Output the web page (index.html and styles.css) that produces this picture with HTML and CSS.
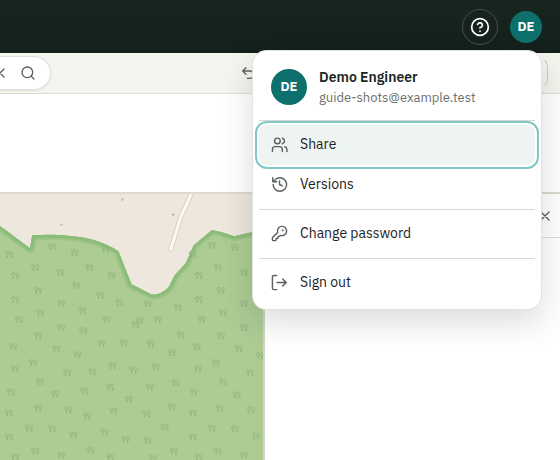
FILE: index.html
```
<!DOCTYPE html>
<html lang="en">
<head>
<meta charset="utf-8">
<title>Map editor</title>
<link rel="stylesheet" href="styles.css">
</head>
<body>
<header class="topbar">
  <button class="help" type="button" aria-label="Help">
    <svg class="icon icon-help" viewBox="0 0 24 24"><circle cx="12" cy="12" r="10"/><path d="M9.1 9a3 3 0 0 1 5.8 1c0 2-3 3-3 3M12 17h.01"/></svg>
  </button>
  <div class="account">
    <button class="avatar" type="button">DE</button>
    <div class="menu">
      <div class="profile">
        <span class="avatar avatar-large">DE</span>
        <div>
          <div class="name">Demo Engineer</div>
          <div class="email">guide-shots@example.test</div>
        </div>
      </div>
      <hr>
      <button class="item item-focused" type="button">
        <svg class="icon" viewBox="0 0 24 24"><path d="M16 22v-3a4 4 0 0 0-4-4H6a4 4 0 0 0-4 4v3M22.500 22v-3a4 4 0 0 0-3-3.870M16 3.130a4 4 0 0 1 0 7.750"/><circle cx="9" cy="7" r="4"/></svg>
        Share
      </button>
      <button class="item" type="button">
        <svg class="icon" viewBox="0 0 24 24"><path d="M3 12a9.500 9.500 0 1 0 9.500-9.500 9.750 9.750 0 0 0-7.240 3.240L2.500 8M2.500 2.500V8H8M12 7v5l4 2"/></svg>
        Versions
      </button>
      <hr>
      <button class="item" type="button">
        <svg class="icon" viewBox="0 0 24 24"><path d="M2.586 17.414A2 2 0 0 0 2 18.828V21a1 1 0 0 0 1 1h3a1 1 0 0 0 1-1v-1a1 1 0 0 1 1-1h1a1 1 0 0 0 1-1v-1a1 1 0 0 1 1-1h.172a2 2 0 0 0 1.414-.586l.814-.814a6.5 6.5 0 1 0-4-4z"/><circle cx="16.5" cy="7.5" r=".5"/></svg>
        Change password
      </button>
      <hr>
      <button class="item" type="button">
        <svg class="icon" viewBox="0 0 24 24"><path d="M8 2H4a2 2 0 0 0-2 2v16a2 2 0 0 0 2 2h4M16.500 17l5-5-5-5M21.500 12H8.500"/></svg>
        Sign out
      </button>
    </div>
  </div>
</header>
<div class="toolbar">
  <div class="search">
    <button class="plain" type="button" aria-label="Clear"><svg class="icon" viewBox="0 0 24 24"><path d="M18 6 6 18M6 6l12 12"/></svg></button>
    <button class="plain" type="button" aria-label="Search"><svg class="icon" viewBox="0 0 24 24"><circle cx="11" cy="11" r="8"/><path d="m21 21-4.300-4.300"/></svg></button>
  </div>
  <div class="tools">
    <button class="plain" type="button" aria-label="Undo"><svg class="icon" viewBox="0 0 24 24"><path d="M9 14 4 9l5-5M4 9h10.500a5.500 5.500 0 0 1 0 11H11"/></svg></button>
  </div>
</div>
<div class="blank"></div>
<main class="workspace">
  <div class="map">
    <svg class="terrain" viewBox="0 195 263 265" preserveAspectRatio="xMinYMin slice" aria-hidden="true">
      <defs>
        <g id="tree"><path d="M-1.500 3.500V-.5C-4.500 1-4-3-2-3S0-1-1.500-.5M2 3.500V.5C0 1 0-2.500 2-2.500S4.500 0 2 .5M2 3.500 3.800 2M-1.500 3-3 2"/></g>
        <clipPath id="edge"><path d="M0 227 30 249 32 236Q65 234 91 240Q108 245 118 252L131 285 135 287 151 295Q160 296 168 288L174 276 185 264 193 246 211 231Q220 232 233 237L264 230V460H0Z"/></clipPath>
      </defs>
      <g clip-path="url(#edge)">
        <path class="wood" d="M0 193H264V460H0Z"/>
        <path class="wood-shade" d="M0 227 30 249 32 236Q65 234 91 240Q108 245 118 252L131 285 135 287 151 295Q160 296 168 288L174 276 185 264 193 246 211 231Q220 232 233 237L264 230"/>
        <path class="wood-edge" d="M0 227 30 249 32 236Q65 234 91 240Q108 245 118 252L131 285 135 287 151 295Q160 296 168 288L174 276 185 264 193 246 211 231Q220 232 233 237L264 230"/>
      </g>
      <path class="road-casing" d="M191 194 180 218 173 241 170 250"/>
      <path class="road" d="M191 194 180 218 173 241 170 250"/>
      <g class="dots"><circle cx="61" cy="225.500" r="1.200"/><circle cx="122" cy="200.500" r="1.200"/><circle cx="172.500" cy="215.500" r="1.200"/></g>
      <g class="trees" id="trees"></g>
    </svg>
  </div>
  <aside class="panel">
    <div class="panel-head">
      <button class="plain" type="button" aria-label="Close panel"><svg class="icon" viewBox="0 0 24 24"><path d="M18 6 6 18M6 6l12 12"/></svg></button>
    </div>
  </aside>
</main>
<script src="trees.js"></script>
</body>
</html>
```
FILE: trees.js
```
const spots = [
  [9,255],[52,247],[74,253],[105,250],[35,268],[15,276],[60,273],[89,268],[111,276],[76,286],
  [38,291],[15,300],[100,296],[61,304],[119,303],[40,313],[82,311],[19,320],[106,320],[192,255],
  [211,246],[234,248],[217,268],[198,276],[243,273],[220,291],[198,300],[243,304],[222,313],[147,304],
  [177,308],[201,320],[157,320],[61,328],[38,336],[83,331],[135,325],[13,347],[56,349],[77,355],
  [101,344],[123,343],[33,363],[15,369],[40,382],[67,373],[92,372],[112,366],[133,370],[11,392],
  [55,394],[84,391],[110,387],[128,399],[38,408],[9,413],[68,410],[87,416],[113,411],[29,428],
  [9,437],[52,429],[73,435],[104,432],[125,439],[35,451],[61,455],[90,450],[110,457],[15,457],
  [180,335],[220,336],[243,328],[150,344],[171,353],[196,347],[238,349],[259,356],[215,363],[155,367],
  [197,369],[249,373],[175,383],[222,382],[149,387],[193,392],[236,395],[171,407],[146,414],[192,413],
  [219,408],[250,410],[164,427],[211,428],[234,429],[192,437],[147,440],[255,436],[173,451],[217,451],
  [243,455],[198,457],[152,458],[139,321]
];
const layer = document.getElementById("trees");
for (const [x, y] of spots) {
  const tree = document.createElementNS("http://www.w3.org/2000/svg", "use");
  tree.setAttribute("href", "#tree");
  tree.setAttribute("x", x);
  tree.setAttribute("y", y);
  layer.append(tree);
}
```
FILE: styles.css
```
* { box-sizing: border-box; }
body {
  margin: 0;
  min-height: 100vh;
  display: flex;
  flex-direction: column;
  overflow: hidden;
  background: #fff;
  color: #1c2421;
  font: 14px/20px "IBM Plex Sans", Roboto, "Noto Sans", sans-serif;
}
button { margin: 0; padding: 0; border: 0; background: none; color: inherit; font: inherit; }
.icon {
  width: 16px;
  height: 16px;
  flex: none;
  fill: none;
  stroke: #59605d;
  stroke-width: 2;
  stroke-linecap: round;
  stroke-linejoin: round;
}
.topbar {
  height: 53px;
  flex: none;
  display: flex;
  align-items: center;
  justify-content: flex-end;
  gap: 12px;
  padding: 0 18px;
  background: linear-gradient(#18261f, #14201c);
}
.help {
  display: grid;
  place-items: center;
  width: 36px;
  height: 36px;
  border: 1px solid #46514c;
  border-radius: 50%;
}
.icon-help { width: 20px; height: 20px; stroke: #fff; }
.account { position: relative; }
.avatar {
  display: grid;
  place-items: center;
  width: 32px;
  height: 32px;
  border-radius: 50%;
  background: #0d706c;
  color: #fff;
  font-size: 13px;
  font-weight: 700;
}
.avatar-large { width: 36px; height: 36px; flex: none; }
.menu {
  position: absolute;
  z-index: 2;
  top: 39px;
  right: 0;
  width: 290px;
  padding: 6px;
  border: 1px solid #dfe3df;
  border-radius: 14px;
  background: #fff;
  box-shadow: 0 12px 32px rgba(20, 32, 28, .16);
}
.profile { display: flex; align-items: center; gap: 12px; height: 63px; padding: 0 12px 2px; }
.name { font-weight: 600; line-height: 22px; }
.email { color: #6c716e; font-size: 13px; }
.menu hr { height: 1px; margin: 4px 0; border: 0; background: #d8d8d2; }
.menu .profile + hr { margin-top: 0; }
.item {
  display: flex;
  align-items: center;
  gap: 12px;
  width: 100%;
  height: 40px;
  padding: 0 12px 1px;
  border-radius: 8px;
  text-align: left;
}
.item-focused { background: #eef4f2; outline: 2px solid #7fc8c5; outline-offset: 2px; }
.item .icon { width: 17px; height: 17px; }
.toolbar {
  height: 41px;
  flex: none;
  display: flex;
  align-items: center;
  justify-content: space-between;
  padding: 0 12px 0 0;
  border-bottom: 1px solid #deddcc;
  background: #f5f4ee;
}
.plain { display: grid; place-items: center; }
.search {
  display: flex;
  align-items: center;
  justify-content: flex-end;
  gap: 12px;
  width: 51px;
  height: 34px;
  padding-right: 14px;
  border: 1px solid #dfe2dc;
  border-left: 0;
  border-radius: 0 17px 17px 0;
  background: #fff;
  box-shadow: 0 1px 2px rgba(20, 32, 28, .1);
}
.tools {
  display: flex;
  align-items: center;
  width: 308px;
  height: 32px;
  border: solid #cfcebd;
  border-width: 1px 1px 1px 0;
  border-color: transparent #cfcebd transparent transparent;
  border-radius: 0 10px 10px 0;
}
.blank { height: 98px; flex: none; }
.workspace { display: flex; flex: 1; border-top: 2px solid #dddacf; }
.map { position: relative; flex: 0 0 265px; overflow: hidden; border-right: 2px solid #d4d1c6; background: #eee7dd; }
.terrain { display: block; width: 100%; height: 100%; }
.wood { fill: #adcc94; }
.wood-edge, .wood-shade { fill: none; stroke-linejoin: round; }
.wood-edge { stroke: #8bbd79; stroke-width: 6; }
.wood-shade { stroke: #9dc487; stroke-width: 10; }
.road, .road-casing { fill: none; stroke-linecap: round; stroke-linejoin: round; }
.road-casing { stroke: #ddd2c2; stroke-width: 5; }
.road { stroke: #fdf9ef; stroke-width: 3; }
.dots { fill: #bdb9ae; }
.trees { fill: none; stroke: #8fb07b; stroke-width: .8; }
.panel { flex: 1; background: #fff; }
.panel-head {
  display: flex;
  align-items: center;
  justify-content: flex-end;
  height: 44px;
  padding-right: 7px;
  border-bottom: 1px solid #deddcc;
}
```
